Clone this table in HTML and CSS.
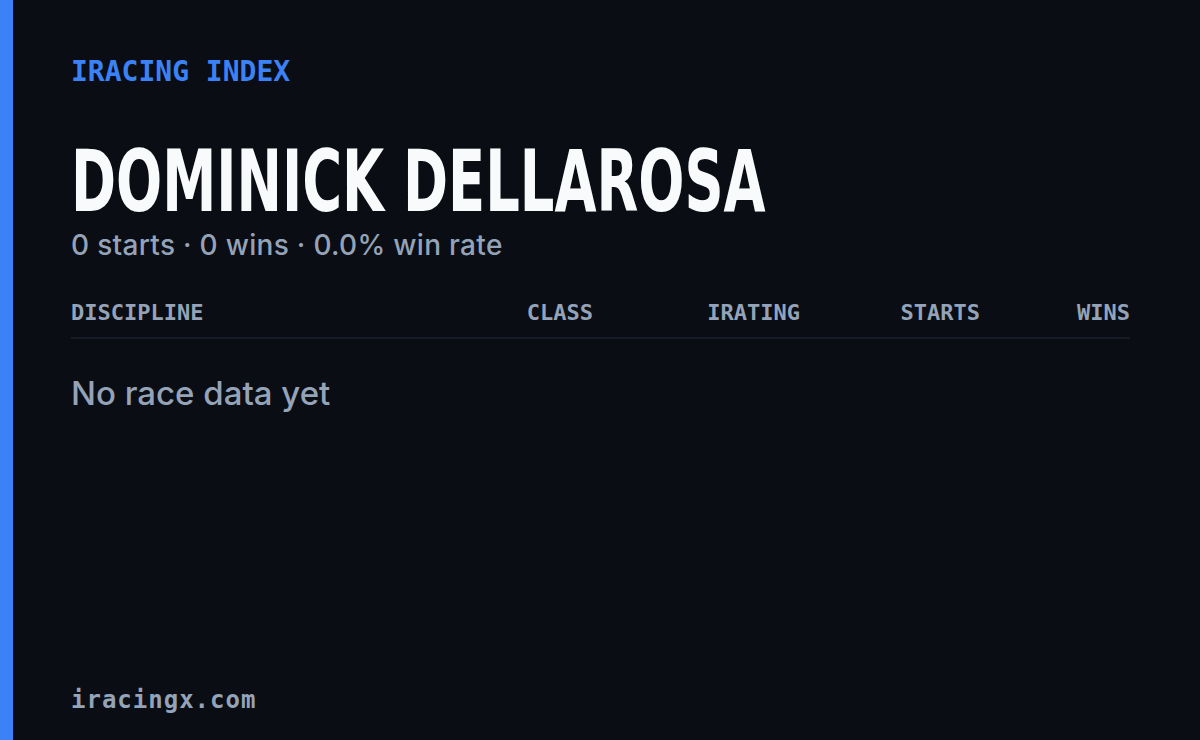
FILE: index.html
```html
<!DOCTYPE html>
<html lang="en">
<head>
    <meta charset="UTF-8">
    <meta name="viewport" content="width=device-width, initial-scale=1.0">
    <title>Dominick Dellarosa - iRacing Index</title>
    <link rel="stylesheet" href="styles.css">
</head>
<body>
    <div class="card">
        <div class="eyebrow">IRACING INDEX</div>

        <h1 class="driver-name"><span>DOMINICK DELLAROSA</span></h1>
        <p class="summary">0 starts · 0 wins · 0.0% win rate</p>

        <div class="table-head">
            <div class="col col-discipline">DISCIPLINE</div>
            <div class="col">CLASS</div>
            <div class="col">IRATING</div>
            <div class="col">STARTS</div>
            <div class="col">WINS</div>
        </div>

        <p class="empty">No race data yet</p>

        <div class="footer">iracingx.com</div>
    </div>
</body>
</html>
```

FILE: styles.css
```css
body {
    margin: 0;
    background-color: #0a0d14;
    color: #f8fafc;
    font-family: 'Inter', 'Open Sans', sans-serif;
    overflow: hidden;
}

.card {
    height: 740px;
    box-sizing: border-box;
    border-left: 13px solid #3b82f6;
    padding: 58px 70px 26px 58px;
    display: flex;
    flex-direction: column;
}

.eyebrow {
    font-family: 'DejaVu Sans Mono', monospace;
    font-weight: bold;
    font-size: 28px;
    line-height: 1;
    color: #3b82f6;
}

.driver-name {
    margin: 60px 0 0 0;
    font-family: 'DejaVu Sans', sans-serif;
    font-stretch: condensed;
    font-weight: bold;
    font-size: 86px;
    line-height: 70px;
    white-space: nowrap;
}

/* no condensed display face offline, so squeeze it */
.driver-name span {
    display: inline-block;
    transform: scaleX(0.702);
    transform-origin: left center;
}

.summary {
    margin: 15px 0 0 0;
    font-size: 28px;
    font-weight: 500;
    letter-spacing: 0.3px;
    line-height: 28px;
    color: #94a3b8;
}

.table-head {
    margin-top: 41px;
    display: grid;
    grid-template-columns: 1fr 120px 207px 180px 150px;
    padding-bottom: 11px;
    border-bottom: 2px solid #161b26;
    font-family: 'DejaVu Sans Mono', monospace;
    font-weight: bold;
    font-size: 22px;
    line-height: 1.2;
    color: #94a3b8;
}

.col {
    text-align: right;
}

.col-discipline {
    text-align: left;
}

.empty {
    margin: 35px 0 0 0;
    font-size: 33px;
    font-weight: 500;
    line-height: 1.2;
    color: #94a3b8;
}

.footer {
    margin-top: auto;
    font-family: 'DejaVu Sans Mono', monospace;
    font-weight: bold;
    font-size: 24px;
    letter-spacing: 1px;
    color: #94a3b8;
}
```
